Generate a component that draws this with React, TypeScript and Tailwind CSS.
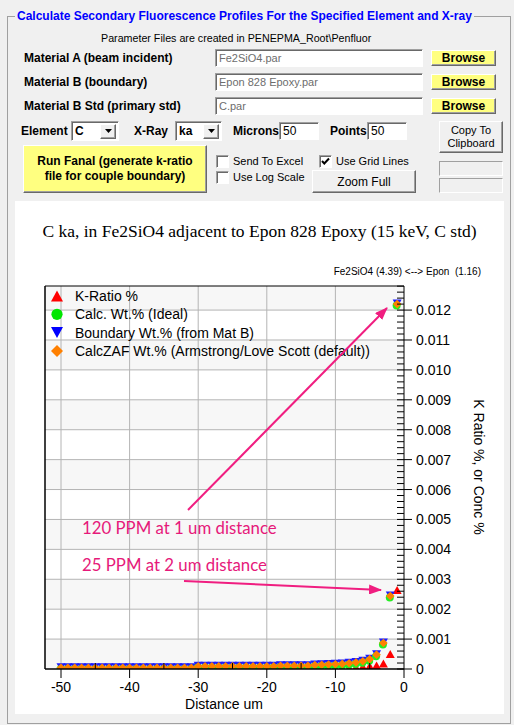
import React from 'react';

// plot geometry, in svg coordinates (svg starts at panel left / 77px below panel top)
const L = 30;
const R = 389;
const T = 8;
const B = 391;
const xs = (v: number) => R + v * 6.86;
const ys = (c: number) => B - c * 29910;

const WT_NEAR = [0.0122, 0.00244, 0.00087, 0.00048, 0.00033, 0.00026, 0.00022, 0.00019, 0.00017, 0.00016, 0.00015, 0.00014, 0.00013];
const KR_NEAR = [0.00264, 0.0005, 0.00018, 0.00012, 0.0001, 0.00008, 0.00006, 0.00004, 0.00003];

const wtAt = (d: number) => {
  if (d <= 13) return WT_NEAR[d - 1];
  if (d <= 18) return 0.00011;
  if (d <= 30) return 0.00009;
  return 0.00004;
};
const krAt = (d: number) => (d <= 9 ? KR_NEAR[d - 1] : 0.00001);

const distances = Array.from({ length: 50 }, (_, i) => i + 1);

const upTri = (cx: number, cy: number, w: number, h: number) =>
  `${cx},${cy - h / 2} ${cx + w / 2},${cy + h / 2} ${cx - w / 2},${cy + h / 2}`;
const downTri = (cx: number, cy: number, w: number, h: number) =>
  `${cx - w / 2},${cy - h / 2} ${cx + w / 2},${cy - h / 2} ${cx},${cy + h / 2}`;
const diamond = (cx: number, cy: number, r: number) =>
  `${cx},${cy - r} ${cx + r},${cy} ${cx},${cy + r} ${cx - r},${cy}`;

const sunken = 'border border-t-[#a0a0a0] border-l-[#a0a0a0] border-b-white border-r-white shadow-[inset_1px_1px_0_#696969]';
const raised = 'border border-t-white border-l-white border-b-[#696969] border-r-[#696969] shadow-[inset_-1px_-1px_0_#a0a0a0]';

function FileRow({ label, value }: { label: string; value: string }) {
  return (
    <div className="flex h-[18px] items-center">
      <div className="w-[200px] pl-[9px] text-[12px] font-bold">{label}</div>
      <div className={`flex h-[18px] w-[208px] items-center bg-white pl-[3px] text-[11px] text-[#6d6d6d] ${sunken}`}>{value}</div>
      <button className={`ml-[8px] flex h-[16px] w-[65px] items-center justify-center bg-[#ffff80] text-[12px] font-bold ${raised}`}>
        Browse
      </button>
    </div>
  );
}

function Combo({ value, width }: { value: string; width: string }) {
  return (
    <div className={`flex h-[20px] items-center bg-white pl-[3px] pr-[2px] text-[12px] ${width} ${sunken}`}>
      <span className="flex-1">{value}</span>
      <div className={`flex h-[15px] w-[16px] items-center justify-center bg-[#f0f0f0] ${raised}`}>
        <svg width="7" height="4" viewBox="0 0 7 4">
          <path d="M0 0 L7 0 L3.5 4 z" fill="#000" />
        </svg>
      </div>
    </div>
  );
}

function Check({ checked, label }: { checked?: boolean; label: string }) {
  return (
    <div className="flex h-[13px] items-center gap-[4px]">
      <div className={`h-[13px] w-[13px] bg-white ${sunken}`}>
        {checked && (
          <svg width="11" height="11" viewBox="0 0 11 11">
            <path d="M2 5 L4.3 7.5 L9 2.5" stroke="#000" strokeWidth="2" fill="none" />
          </svg>
        )}
      </div>
      <span className="text-[11px] leading-[13px] whitespace-nowrap">{label}</span>
    </div>
  );
}

function Chart() {
  const bands = Array.from({ length: 13 }, (_, k) => k);
  const minorY = Array.from({ length: 64 }, (_, i) => i + 1).filter((i) => i % 5 !== 0);
  const majorY = Array.from({ length: 13 }, (_, k) => k);
  const gridX = [-50, -40, -30, -20, -10];
  const majorX = [-50, -40, -30, -20, -10, 0];
  const minorX = [-45, -35, -25, -15, -5];
  const pink = '#f01e80';

  return (
    <svg width="489" height="436" className="block font-['Liberation_Sans',Arial,sans-serif]">
      <defs>
        <clipPath id="plot">
          <rect x={L} y={T} width={R - L} height={B - T} />
        </clipPath>
        <marker id="ah" viewBox="0 0 13 10" refX="12" refY="5" markerWidth="13" markerHeight="10" markerUnits="userSpaceOnUse" orient="auto">
          <path d="M0,0 L13,5 L0,10 z" fill={pink} />
        </marker>
      </defs>

      {bands.map((k) =>
        k % 2 === 0 ? (
          <rect
            key={k}
            x={L}
            y={Math.max(T, ys((k + 1) * 0.001))}
            width={R - L}
            height={ys(k * 0.001) - Math.max(T, ys((k + 1) * 0.001))}
            fill="#f7f7f7"
          />
        ) : null,
      )}
      {majorY.slice(1).map((k) => (
        <line key={k} x1={L} x2={R} y1={ys(k * 0.001)} y2={ys(k * 0.001)} stroke="#b4b4b4" />
      ))}
      {gridX.map((v) => (
        <line key={v} x1={xs(v)} x2={xs(v)} y1={T} y2={B} stroke="#b4b4b4" />
      ))}

      {/* legend */}
      <polygon points={upTri(42, 18, 12, 11)} fill="#ff0000" />
      <circle cx={42} cy={36.3} r={5.6} fill="#00e600" />
      <polygon points={downTri(42, 54.6, 12, 11)} fill="#0000ff" />
      <polygon points={diamond(42, 73, 6)} fill="#ff8000" />
      <g fontSize="14" fill="#000">
        <text x={60} y={23}>K-Ratio %</text>
        <text x={60} y={41.3}>Calc. Wt.% (Ideal)</text>
        <text x={60} y={59.6}>Boundary Wt.% (from Mat B)</text>
        <text x={60} y={78}>CalcZAF Wt.% (Armstrong/Love Scott (default))</text>
      </g>

      {/* data */}
      <g clipPath="url(#plot)">
        {distances.map((d) => (
          <polygon key={`k${d}`} points={upTri(xs(-d), ys(krAt(d)), 9, 8)} fill="#ff0000" />
        ))}
        {distances.map((d) => (
          <polygon key={`b${d}`} points={downTri(xs(-d), ys(wtAt(d)) - 0.5, 9, 8)} fill="#1c1cff" />
        ))}
        {distances.map((d) => (
          <circle key={`g${d}`} cx={xs(-d) - 0.5} cy={ys(wtAt(d)) + 1.5} r={4} fill="#22ee22" />
        ))}
        {distances.map((d) => (
          <polygon key={`o${d}`} points={diamond(xs(-d), ys(wtAt(d)), 4.3)} fill="#ff8000" />
        ))}
      </g>

      {/* axes */}
      <line x1={L} x2={L} y1={T} y2={B} stroke="#000" strokeWidth="1.5" />
      <line x1={L} x2={R} y1={T} y2={T} stroke="#000" />
      <line x1={R} x2={R} y1={T} y2={B} stroke="#000" />
      <line x1={L} x2={R} y1={B} y2={B} stroke="#000" strokeWidth="1.5" />
      {minorY.map((i) => (
        <line key={i} x1={R - 7} x2={R} y1={ys(i * 0.0002)} y2={ys(i * 0.0002)} stroke="#000" />
      ))}
      {majorY.map((k) => (
        <line key={k} x1={R - 7} x2={R + 8} y1={ys(k * 0.001)} y2={ys(k * 0.001)} stroke="#000" />
      ))}
      {minorX.map((v) => (
        <line key={v} x1={xs(v)} x2={xs(v)} y1={B - 6} y2={B} stroke="#000" />
      ))}
      {majorX.map((v) => (
        <line key={v} x1={xs(v)} x2={xs(v)} y1={B} y2={B + 9} stroke="#000" />
      ))}

      <g fontSize="14" fill="#000">
        {majorY.map((k) => (
          <text key={k} x={401} y={ys(k * 0.001) + 5}>
            {k === 0 ? '0' : (k * 0.001).toFixed(3)}
          </text>
        ))}
        {majorX.map((v) => (
          <text key={v} x={xs(v)} y={414} textAnchor="middle">
            {v}
          </text>
        ))}
        <text x={209} y={431} textAnchor="middle">
          Distance um
        </text>
        <text x={464} y={189} textAnchor="middle" dominantBaseline="central" transform="rotate(90 464 189)">
          K Ratio %, or Conc %
        </text>
      </g>

      {/* annotations */}
      <line x1={173} y1={232} x2={372} y2={30} stroke={pink} strokeWidth="2" markerEnd="url(#ah)" />
      <line x1={169} y1={303} x2={366} y2={312} stroke={pink} strokeWidth="2" markerEnd="url(#ah)" />
      <g className="font-['Lato',sans-serif]" fontSize="16.8" fill="#e6197a">
        <text x={67} y={256}>120 PPM at 1 um distance</text>
        <text x={67} y={293}>25 PPM at 2 um distance</text>
      </g>
    </svg>
  );
}

export default function App() {
  return (
    <div className="h-[725px] w-[514px] overflow-hidden bg-[#f0f0f0] font-['Liberation_Sans',Arial,sans-serif] text-black">
      <fieldset className="ml-[7px] mt-[8px] h-[716px] w-[504px] border border-[#a0a0a0] pl-[7px] pr-[5px] pt-[7px]">
        <legend className="px-[2px] text-[12px] font-bold leading-[16px] text-[#0000ff]">
          Calculate Secondary Fluorescence Profiles For the Specified Element and X-ray
        </legend>

        <div className="ml-[86px] h-[14px] text-[10.7px] leading-[14px]">Parameter Files are created in PENEPMA_Root\Penfluor</div>

        <div className="mt-[4px] flex flex-col gap-[6px]">
          <FileRow label="Material A (beam incident)" value="Fe2SiO4.par" />
          <FileRow label="Material B (boundary)" value="Epon 828 Epoxy.par" />
          <FileRow label="Material B Std (primary std)" value="C.par" />
        </div>

        <div className="mt-[6px] flex">
          <div className="w-[424px]">
            <div className="flex h-[20px] items-center text-[12px] font-bold">
              <span className="ml-[6px] w-[50px]">Element</span>
              <Combo value="C" width="w-[48px]" />
              <span className="ml-[15px] w-[41px]">X-Ray</span>
              <Combo value="ka" width="w-[47px]" />
              <span className="ml-[11px] w-[46px] whitespace-nowrap">Microns</span>
              <div className={`flex h-[18px] w-[40px] items-center bg-white pl-[3px] text-[12px] font-normal ${sunken}`}>50</div>
              <span className="ml-[11px] w-[37px]">Points</span>
              <div className={`flex h-[18px] w-[40px] items-center bg-white pl-[3px] text-[12px] font-normal ${sunken}`}>50</div>
            </div>

            <div className="mt-[4px] flex">
              <button
                className={`ml-[8px] flex h-[48px] w-[184px] flex-col items-center justify-center bg-[#ffff80] text-[12px] font-bold leading-[15px] ${raised} shadow-[inset_-1px_-1px_0_#a0a0a0,1px_1px_0_#000]`}
              >
                <span>Run Fanal (generate k-ratio</span>
                <span>file for couple boundary)</span>
              </button>
              <div className="ml-[9px] pt-[10px]">
                <div className="flex">
                  <div className="w-[103px]">
                    <Check label="Send To Excel" />
                  </div>
                  <Check checked label="Use Grid Lines" />
                </div>
                <div className="mt-[2px] flex">
                  <div className="w-[96px] pt-[1px]">
                    <Check label="Use Log Scale" />
                  </div>
                  <button className={`flex h-[23px] w-[104px] items-center justify-center bg-[#f0f0f0] text-[12px] ${raised}`}>
                    Zoom Full
                  </button>
                </div>
              </div>
            </div>
          </div>

          <div className="w-[64px]">
            <button className={`flex h-[32px] w-[64px] flex-col items-center justify-center bg-[#f0f0f0] text-[11px] leading-[13px] ${raised}`}>
              <span>Copy To</span>
              <span>Clipboard</span>
            </button>
            <div className={`mt-[8px] h-[15px] w-[64px] bg-[#f0f0f0] ${sunken} shadow-none`} />
            <div className={`mt-[2px] h-[15px] w-[64px] bg-[#f0f0f0] ${sunken} shadow-none`} />
          </div>
        </div>

        <div className="mt-[8px] h-[513px] w-[489px] bg-white">
          <div className="pt-[20px] text-center font-['Liberation_Serif',serif] text-[17.5px] leading-[20px]">
            C ka, in Fe2SiO4 adjacent to Epon 828 Epoxy (15 keV, C std)
          </div>
          <div className="mt-[25px] pr-[23px] text-right text-[10px] leading-[12px] whitespace-pre">
            {'Fe2SiO4 (4.39) <--> Epon  (1.16)'}
          </div>
          <Chart />
        </div>
      </fieldset>
    </div>
  );
}
